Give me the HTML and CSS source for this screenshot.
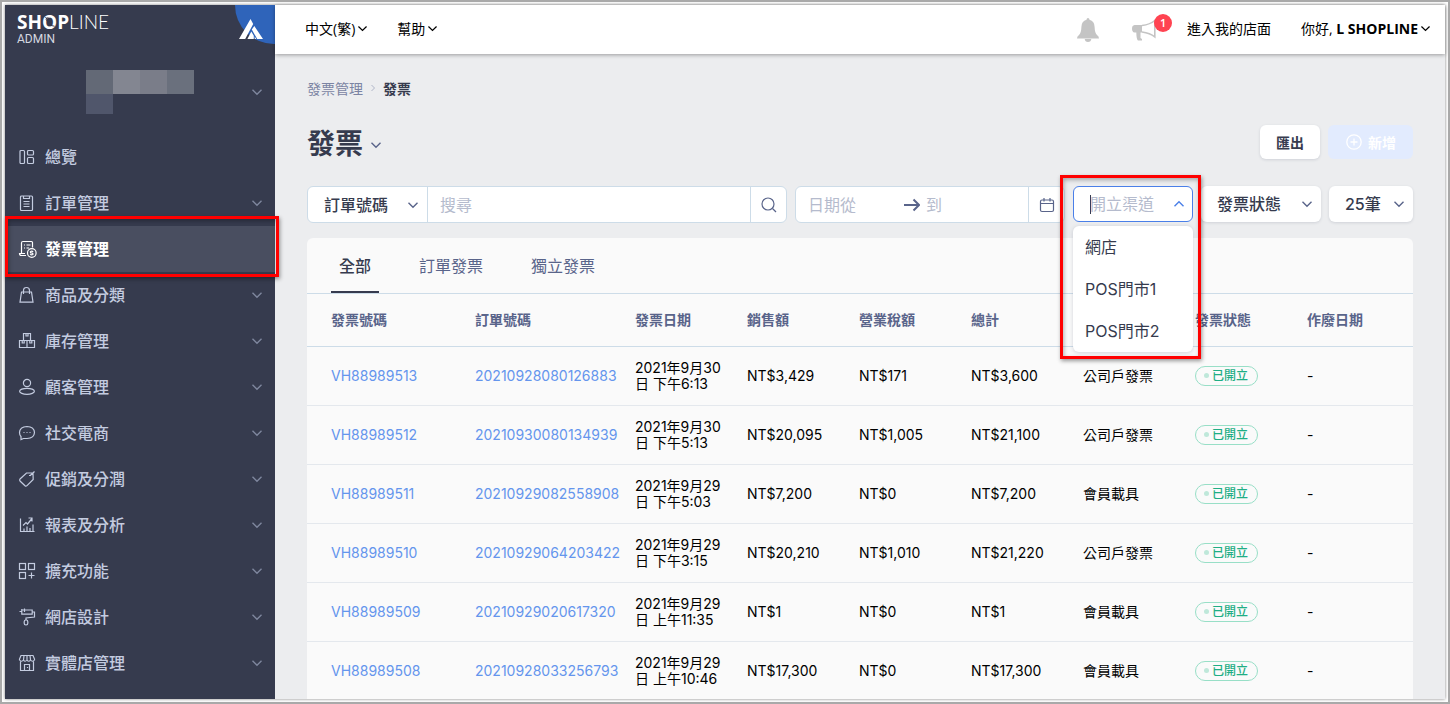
FILE: index.html
```html
<!DOCTYPE html>
<html lang="zh-Hant">
<head>
    <meta charset="UTF-8">
    <meta name="viewport" content="width=device-width, initial-scale=1.0">
    <title>發票管理 - SHOPLINE Admin</title>
    <link rel="stylesheet" href="styles.css">
</head>
<body>

<svg class="sprite" aria-hidden="true">
    <symbol id="down" viewBox="0 0 10 10"><path d="M0.5 2.8 L5 7.2 L9.5 2.8"/></symbol>
    <symbol id="up" viewBox="0 0 10 10"><path d="M0.5 7.2 L5 2.8 L9.5 7.2"/></symbol>
</svg>

<div class="app">
    <aside class="sidebar">
        <div class="brand">
            <div class="logo">
                <div class="logo-name"><b>SH<span class="logo-o">O<svg viewBox="0 0 16 16"><path d="M3.5 2.5 Q7 3.5 6.5 7.5 Q9 12.5 13.5 12"/><circle cx="6" cy="4.5" r="1.6"/></svg></span>P</b><span class="thin">LINE</span></div>
                <div class="logo-sub">ADMIN</div>
            </div>
            <a href="#" class="brand-corner" aria-label="Academy">
                <svg viewBox="0 0 24 20"><path fill="#fff" d="M0 20 L11.5 0 L14.2 5 L6.2 20 Z M15.3 7 L24 20 H18.2 L12.8 10.5 Z M12.3 12.6 L14.8 16.8 V20 H8.4 Z M15.7 17.6 L17.2 20 H15.7 Z"/></svg>
            </a>
        </div>

        <button class="account" aria-label="Store">
            <span class="mask">
                <i class="m1"></i><i class="m2"></i><i class="m3"></i><i class="m4"></i><i class="m5"></i>
            </span>
            <svg class="chev"><use href="#down"/></svg>
        </button>

        <nav class="menu">
            <a href="#"><svg class="ico" viewBox="0 0 16 16"><rect x="1" y="1.5" width="4.5" height="13" rx="1"/><rect x="8.5" y="1.5" width="6" height="4.5" rx="1"/><rect x="8.5" y="8.5" width="6" height="6" rx="1"/></svg><span>總覽</span></a>
            <a href="#"><svg class="ico" viewBox="0 0 16 16"><rect x="1.5" y="1" width="12" height="14.5" rx="1"/><path d="M4.5 1 V3.5 H10.5 V1 M4.5 6.5 H10.5 M4.5 9 H10.5 M4.5 11.5 H10.5"/></svg><span>訂單管理</span><svg class="chev"><use href="#down"/></svg></a>
            <a href="#" class="active"><svg class="ico" viewBox="0 0 16 16"><path d="M2.5 12 V2 Q2.5 0.5 4 0.5 H12.5 Q13.5 0.5 13.5 1.5 V6.5 M7 14.5 H2.5 Q0.5 14.5 0.5 12.5 H6 M5 4 H6 M7.5 4 H11.5 M5 7 H6 M7.5 7 H10"/><circle cx="12.8" cy="12" r="4.3"/><path d="M14.2 10.7 Q12.7 9.6 11.5 10.6 Q11 11.7 12.7 12 Q14.4 12.4 13.9 13.4 Q12.7 14.5 11.2 13.3"/></svg><span>發票管理</span><i class="mark"></i></a>
            <a href="#"><svg class="ico" viewBox="0 0 16 16"><path d="M2.5 5 H12.5 L14 15.2 H1 Z M4.5 7 V3.5 Q4.5 0.5 7.5 0.5 Q10.5 0.5 10.5 3.5 V7"/></svg><span>商品及分類</span><svg class="chev"><use href="#down"/></svg></a>
            <a href="#"><svg class="ico" viewBox="0 0 16 16"><path d="M4.5 0.5 H11.5 V7.5 H4.5 Z M0.5 7.5 H15.5 V14.5 H0.5 Z M8 7.5 V14.5 M7 0.5 V3 H9 V0.5 M3.2 7.5 V10 H5.2 V7.5 M10.8 7.5 V10 H12.8 V7.5"/></svg><span>庫存管理</span><svg class="chev"><use href="#down"/></svg></a>
            <a href="#"><svg class="ico" viewBox="0 0 16 16"><circle cx="8" cy="4" r="3.6"/><ellipse cx="8" cy="12.3" rx="7.4" ry="3"/></svg><span>顧客管理</span><svg class="chev"><use href="#down"/></svg></a>
            <a href="#"><svg class="ico" viewBox="0 0 16 16"><path d="M2 14.5 V11.5 Q0.5 10 0.5 7.5 Q0.8 1.8 8 1.5 Q15.2 1.8 15.5 7.5 Q15.2 13.2 8 13.5 H4.5 Z M4.5 7.5 H5.5 M7.5 7.5 H8.5 M10.5 7.5 H11.5"/></svg><span>社交電商</span><svg class="chev"><use href="#down"/></svg></a>
            <a href="#"><svg class="ico" viewBox="0 0 16 16"><path d="M15.5 0.5 L11 4.7 M13.6 2 L7.5 2 L1 8 Q0.2 9 1 10 L6 14.8 Q7 15.6 8 14.6 L14.2 8.5 L14 2.2 M12 4.5 H10"/></svg><span>促銷及分潤</span><svg class="chev"><use href="#down"/></svg></a>
            <a href="#"><svg class="ico" viewBox="0 0 16 16"><path d="M1.5 1.5 V14.5 H15.5 M5 14 V11.5 M8 14 V9.5 M11 14 V11 M14 14 V7.5 M4 8.5 L7 5.5 L8.5 7 L13 1.5 M9.5 1 H13 V4.5"/></svg><span>報表及分析</span><svg class="chev"><use href="#down"/></svg></a>
            <a href="#"><svg class="ico" viewBox="0 0 16 16"><rect x="0.5" y="0.5" width="6" height="6"/><rect x="9.5" y="0.5" width="6" height="6"/><rect x="0.5" y="9.5" width="6" height="6"/><path d="M12.5 9.5 V15.5 M9.5 12.5 H15.5"/></svg><span>擴充功能</span><svg class="chev"><use href="#down"/></svg></a>
            <a href="#"><svg class="ico" viewBox="0 0 16 16"><path d="M0.5 2.5 H3 M2.8 0 V5.2 H13.2 V1 H3 M5.5 -0.5 V3 M13.2 3 H15.5 V8 L7 9 V11"/><rect x="5.2" y="11" width="3.6" height="5" rx="1.7"/></svg><span>網店設計</span><svg class="chev"><use href="#down"/></svg></a>
            <a href="#"><svg class="ico" viewBox="0 0 16 16"><path d="M2 0.5 H14 L15.5 4 V5 Q13.5 7.5 11.5 5 Q9.8 7.5 8 5 Q6 7.5 4.5 5 Q2.5 7.5 0.5 5 V4 Z M5 0.5 L4.5 5 M8 0.5 V5 M11 0.5 L11.5 5 M1.5 6.5 V15.5 H14.5 V6.5 M5.5 15.5 V9.5 H10.5 V15.5 M8.5 12 V13"/></svg><span>實體店管理</span><svg class="chev"><use href="#down"/></svg></a>
        </nav>
    </aside>

    <div class="page">
        <header class="topbar">
            <button class="top-item">中文(繁)<svg class="chev"><use href="#down"/></svg></button>
            <button class="top-item help">幫助<svg class="chev"><use href="#down"/></svg></button>
            <button class="top-icon bell" aria-label="通知"><svg viewBox="0 0 22 24"><path d="M11 0 Q12.4 0 12.5 1.8 Q17.5 3 17.6 9 Q17.8 15 20 17 Q22 18.4 22 20.4 H0 Q0 18.4 2 17 Q4.2 15 4.4 9 Q4.5 3 9.5 1.8 Q9.6 0 11 0 Z M7.7 21 H14.3 Q14 24 11 24 Q8 24 7.7 21 Z"/></svg></button>
            <button class="top-icon horn" aria-label="公告"><svg viewBox="0 0 24 22"><path d="M2.5 6 H10 V13.5 H8.5 V19 L10 20 V21.5 H6 Q4.5 21 4.3 13.5 H2.5 Q0 13 0 9.7 Q0 6.4 2.5 6 Z"/><path class="cone" d="M10 6.5 Q18 5.5 22.8 1.5 V17.8 Q18 14 10 13"/></svg><span class="count">1</span></button>
            <a href="#" class="top-link">進入我的店面</a>
            <button class="top-item">你好,&nbsp;<b>L SHOPLINE</b><svg class="chev"><use href="#down"/></svg></button>
        </header>

        <main class="content">
            <nav class="crumbs">
                <a href="#">發票管理</a>
                <svg viewBox="0 0 6 8"><path d="M1.5 1 L4.5 4 L1.5 7"/></svg>
                <span>發票</span>
            </nav>

            <div class="heading">
                <h1>發票</h1>
                <svg class="chev"><use href="#down"/></svg>
                <button class="btn export">匯出</button>
                <button class="btn add" disabled><svg viewBox="0 0 16 16"><circle cx="8" cy="8" r="7.2"/><path d="M8 4.5 V11.5 M4.5 8 H11.5"/></svg>新增</button>
            </div>

            <div class="filters">
                <div class="search">
                    <div class="pick">
                        <select aria-label="搜尋欄位"><option>訂單號碼</option></select>
                        <svg class="chev"><use href="#down"/></svg>
                    </div>
                    <input type="text" placeholder="搜尋" aria-label="搜尋">
                    <button class="side-btn" aria-label="搜尋"><svg viewBox="0 0 16 16"><circle cx="7" cy="7" r="6"/><path d="M11.5 11.5 L15 15"/></svg></button>
                </div>
                <div class="dates">
                    <input type="text" class="from" placeholder="日期從" aria-label="日期從">
                    <svg class="arrow" viewBox="0 0 16 14"><path d="M0 7 H15 M9.5 1.5 L15 7 L9.5 12.5"/></svg>
                    <input type="text" class="to" placeholder="到" aria-label="到">
                    <button class="side-btn" aria-label="選擇日期"><svg viewBox="0 0 16 16"><rect x="1.5" y="3" width="13" height="11.5" rx="1.5"/><path d="M1.5 6.5 H14.5 M5 1 V4.5 M11 1 V4.5"/></svg></button>
                </div>
                <div class="channel">
                    <div class="pick open">
                        <i class="caret"></i>
                        <input type="text" role="combobox" aria-expanded="true" aria-controls="channels" placeholder="開立渠道" aria-label="開立渠道">
                        <svg class="chev"><use href="#up"/></svg>
                    </div>
                    <ul class="options" id="channels" role="listbox">
                        <li role="option">網店</li>
                        <li role="option">POS門市1</li>
                        <li role="option">POS門市2</li>
                    </ul>
                    <i class="mark"></i>
                </div>
                <div class="pick card-pick status-pick">
                    <select aria-label="發票狀態"><option>發票狀態</option></select>
                    <svg class="chev"><use href="#down"/></svg>
                </div>
                <div class="pick card-pick size-pick">
                    <select aria-label="每頁筆數"><option>25筆</option></select>
                    <svg class="chev"><use href="#down"/></svg>
                </div>
            </div>

            <section class="card">
                <div class="tabs" role="tablist">
                    <button role="tab" aria-selected="true" class="current">全部</button>
                    <button role="tab">訂單發票</button>
                    <button role="tab">獨立發票</button>
                </div>
                <table>
                    <colgroup>
                        <col class="c-no"><col class="c-order"><col><col><col><col><col><col><col class="c-void">
                    </colgroup>
                    <thead>
                        <tr>
                            <th>發票號碼</th>
                            <th>訂單號碼</th>
                            <th>發票日期</th>
                            <th>銷售額</th>
                            <th>營業稅額</th>
                            <th>總計</th>
                            <th></th>
                            <th>發票狀態</th>
                            <th>作廢日期</th>
                        </tr>
                    </thead>
                    <tbody>
                        <tr>
                            <td><a href="#">VH88989513</a></td>
                            <td><a href="#">20210928080126883</a></td>
                            <td>2021年9月30日 下午6:13</td>
                            <td>NT$3,429</td>
                            <td>NT$171</td>
                            <td>NT$3,600</td>
                            <td>公司戶發票</td>
                            <td><span class="tag">已開立</span></td>
                            <td>-</td>
                        </tr>
                        <tr>
                            <td><a href="#">VH88989512</a></td>
                            <td><a href="#">20210930080134939</a></td>
                            <td>2021年9月30日 下午5:13</td>
                            <td>NT$20,095</td>
                            <td>NT$1,005</td>
                            <td>NT$21,100</td>
                            <td>公司戶發票</td>
                            <td><span class="tag">已開立</span></td>
                            <td>-</td>
                        </tr>
                        <tr>
                            <td><a href="#">VH88989511</a></td>
                            <td><a href="#">20210929082558908</a></td>
                            <td>2021年9月29日 下午5:03</td>
                            <td>NT$7,200</td>
                            <td>NT$0</td>
                            <td>NT$7,200</td>
                            <td>會員載具</td>
                            <td><span class="tag">已開立</span></td>
                            <td>-</td>
                        </tr>
                        <tr>
                            <td><a href="#">VH88989510</a></td>
                            <td><a href="#">20210929064203422</a></td>
                            <td>2021年9月29日 下午3:15</td>
                            <td>NT$20,210</td>
                            <td>NT$1,010</td>
                            <td>NT$21,220</td>
                            <td>公司戶發票</td>
                            <td><span class="tag">已開立</span></td>
                            <td>-</td>
                        </tr>
                        <tr>
                            <td><a href="#">VH88989509</a></td>
                            <td><a href="#">20210929020617320</a></td>
                            <td>2021年9月29日 上午11:35</td>
                            <td>NT$1</td>
                            <td>NT$0</td>
                            <td>NT$1</td>
                            <td>會員載具</td>
                            <td><span class="tag">已開立</span></td>
                            <td>-</td>
                        </tr>
                        <tr>
                            <td><a href="#">VH88989508</a></td>
                            <td><a href="#">20210928033256793</a></td>
                            <td>2021年9月29日 上午10:46</td>
                            <td>NT$17,300</td>
                            <td>NT$0</td>
                            <td>NT$17,300</td>
                            <td>會員載具</td>
                            <td><span class="tag">已開立</span></td>
                            <td>-</td>
                        </tr>
                    </tbody>
                </table>
            </section>
        </main>
    </div>
</div>

</body>
</html>
```

FILE: styles.css
```css
* {
    box-sizing: border-box;
}
body {
    margin: 0;
    height: 100vh;
    padding: 3px;
    border: 2px solid #a9a9a9;
    background: #fff;
    overflow: hidden;
    font-family: Inter, "Noto Sans CJK TC", sans-serif;
    font-size: 14px;
    color: #000;
}
a {
    text-decoration: none;
    color: inherit;
}
button, input, select {
    font: inherit;
    color: inherit;
    border: none;
    background: none;
    padding: 0;
    margin: 0;
}
input, select {
    outline: none;
    min-width: 0;
}
svg {
    flex: none;
    fill: none;
    stroke: currentColor;
}
.sprite {
    display: none;
}
.chev {
    width: 10px;
    height: 10px;
    stroke-width: 1.4;
}
.app {
    display: flex;
    height: 100%;
    box-shadow: 0 0 3px rgba(0, 0, 0, 0.5);
}
.mark {
    position: absolute;
    border: 3px solid #ff0000;
    box-shadow: 1px 2px 4px rgba(0, 0, 0, 0.4), inset 1px 2px 4px rgba(0, 0, 0, 0.3);
    pointer-events: none;
    z-index: 5;
}

/* sidebar */
.sidebar {
    width: 270px;
    flex: none;
    background: #363b4e;
    color: #c4cce0;
}
.brand {
    display: flex;
    justify-content: space-between;
    height: 40px;
    padding-left: 12px;
}
.logo {
    padding-top: 7px;
    color: #fff;
}
.logo-name {
    font-family: "Open Sans", sans-serif;
    font-size: 19px;
    line-height: 20px;
}
.thin {
    font-family: Lato, sans-serif;
    font-weight: 300;
}
.logo-o {
    position: relative;
}
.logo-o svg {
    position: absolute;
    left: 0;
    top: 6px;
    width: 15px;
    height: 15px;
    stroke: #363b4e;
}
.logo-sub {
    font-family: Roboto, sans-serif;
    font-size: 12px;
    line-height: 14px;
    color: #d5d8e0;
}
.brand-corner {
    display: flex;
    width: 40px;
    height: 39px;
    padding: 14px 0 0 4px;
    background: #2f64ba;
    border-radius: 0 0 0 40px;
}
.brand-corner svg {
    width: 24px;
    height: 20px;
    stroke: none;
}
.account {
    display: flex;
    align-items: center;
    justify-content: space-between;
    width: 100%;
    height: 89px;
    padding: 5px 13px 0 81px;
    color: #7f879e;
}
.mask {
    display: grid;
    grid-template-columns: repeat(4, 27px);
    grid-template-rows: 24px 20px;
}
.m1 { background: #636976; }
.m2 { background: #838691; }
.m3 { background: #7a7d89; }
.m4 { background: #6a707d; }
.m5 { background: #50566b; }
.menu a {
    display: flex;
    align-items: center;
    height: 46px;
    padding: 0 13px 0 14px;
    position: relative;
    font-size: 16px;
    font-weight: 500;
}
.menu span {
    flex: 1;
    margin-left: 10px;
    padding-bottom: 2px;
}
.menu .chev {
    color: #7f879e;
}
.ico {
    width: 16px;
    height: 16px;
    overflow: visible;
    stroke-width: 1.2;
}
.menu .active {
    background: #494e60;
    color: #fff;
    font-weight: 700;
}
.menu .mark {
    left: 0;
    right: -4px;
    top: -10px;
    bottom: -5px;
}

/* top bar */
.page {
    flex: 1;
    min-width: 0;
    display: flex;
    flex-direction: column;
    background: #ecedef;
}
.topbar {
    display: flex;
    align-items: center;
    flex: none;
    height: 49px;
    padding: 0 15px 3px 30px;
    background: #fff;
    box-shadow: 0 1px 4px rgba(0, 0, 0, 0.35);
    font-family: "Open Sans", "Noto Sans CJK TC", sans-serif;
}
.top-item {
    display: flex;
    align-items: center;
}
.top-item .chev {
    width: 9px;
    height: 9px;
    margin-left: 3px;
    overflow: visible;
}
.help {
    margin: 0 auto 0 30px;
}
.top-icon svg {
    display: block;
    fill: #c4c4c4;
    stroke: none;
}
.bell, .horn {
    margin-top: 3px;
}
.bell svg {
    width: 22px;
    height: 24px;
}
.horn {
    position: relative;
    margin-left: 33px;
    margin-right: 31px;
}
.horn svg {
    width: 24px;
    height: 22px;
}
.horn .cone {
    fill: none;
    stroke: #c4c4c4;
    stroke-width: 1.6;
}
.count {
    position: absolute;
    left: 22px;
    top: -5px;
    width: 18px;
    height: 18px;
    border-radius: 50%;
    background: #ff4351;
    color: #fff;
    font-size: 11px;
    font-weight: 600;
    line-height: 18px;
    text-align: center;
}
.top-link {
    margin-right: 30px;
}

/* content */
.content {
    flex: 1;
    min-height: 0;
    overflow: hidden;
    padding: 23px 32px 0;
}
.crumbs {
    display: flex;
    align-items: center;
    gap: 7px;
    height: 22px;
    color: #7b84a3;
}
.crumbs svg {
    width: 6px;
    height: 8px;
    color: #b0b6c8;
}
.crumbs span {
    color: #363b4e;
    font-weight: 700;
}
.heading {
    display: flex;
    align-items: center;
    height: 34px;
    margin: 26px 0 27px;
    color: #363b4e;
}
h1 {
    margin: 0 8px 0 0;
    padding-top: 4px;
    font-size: 28px;
    line-height: 34px;
}
.heading .chev {
    margin-top: 6px;
    color: #59648a;
}
.btn {
    display: flex;
    align-items: center;
    justify-content: center;
    height: 34px;
    padding: 0 16px;
    border-radius: 6px;
    font-weight: 700;
}
.export {
    margin: 0 8px 0 auto;
    background: #fff;
    box-shadow: 0 1px 3px rgba(50, 60, 90, 0.15);
}
.add {
    gap: 6px;
    padding: 0 17px 0 18px;
    background: #e2ebfe;
    color: #fff;
}
.add svg {
    width: 16px;
    height: 16px;
    stroke-width: 1.3;
}
.filters {
    display: flex;
    gap: 8px;
    margin-bottom: 15px;
    font-size: 16px;
    color: #363b4e;
}
.filters ::placeholder {
    color: #b5bbcd;
    opacity: 1;
}
.filters .chev {
    color: #59648a;
}
.search, .dates {
    display: flex;
    align-items: center;
    height: 37px;
    background: #fff;
    border: 1px solid #cddce8;
    border-radius: 6px;
}
.search {
    flex: 1;
}
.search > input {
    flex: 1;
    padding-left: 12px;
}
.dates {
    width: 270px;
    padding-left: 12px;
}
.from {
    width: 96px;
}
.arrow {
    width: 16px;
    height: 14px;
    margin-right: 6px;
    color: #59648a;
    stroke-width: 2;
}
.to {
    flex: 1;
}
.side-btn {
    display: flex;
    align-items: center;
    justify-content: center;
    width: 36px;
    height: 35px;
    border-left: 1px solid #cddce8;
    color: #59648a;
}
.side-btn svg {
    width: 16px;
    height: 16px;
    stroke-width: 1.2;
}
/* select with its chevron laid over the right end */
.pick {
    display: grid;
    align-items: center;
    width: 120px;
    height: 36px;
    flex: none;
}
.pick select, .pick input, .pick .chev {
    grid-area: 1 / 1;
}
.pick select, .pick input {
    appearance: none;
    width: 100%;
    height: 100%;
    padding-left: 16px;
}
.pick select {
    font-weight: 500;
}
.pick .chev {
    justify-self: end;
    margin-right: 9px;
    pointer-events: none;
}
.search .pick {
    height: 35px;
    border-right: 1px solid #cddce8;
}
.card-pick {
    background: #fff;
    border-radius: 6px;
    box-shadow: 0 1px 3px rgba(50, 60, 90, 0.15);
}
.size-pick {
    width: 84px;
}
.channel {
    position: relative;
}
.open {
    background: #fff;
    border: 1px solid #4a7fe8;
    border-radius: 6px;
}
.filters .open .chev {
    margin-right: 8px;
    color: #4a7fe8;
}
.caret {
    grid-area: 1 / 1;
    width: 1px;
    height: 19px;
    margin-left: 16px;
    background: #363b4e;
}
.options {
    position: absolute;
    top: 40px;
    left: 0;
    right: 0;
    margin: 0;
    padding: 0;
    list-style: none;
    background: #fff;
    border-radius: 6px;
    box-shadow: 0 1px 4px rgba(50, 60, 90, 0.2);
    z-index: 4;
}
.options li {
    padding-left: 12px;
    line-height: 42px;
}
.channel .mark {
    top: -11px;
    left: -13px;
    right: -8px;
    height: 184px;
}

/* table card */
.card {
    background: #fafafa;
    border-radius: 6px 6px 0 0;
}
.tabs {
    display: flex;
    gap: 32px;
    padding: 0 24px;
    border-bottom: 1px solid #cddce8;
}
.tabs button {
    height: 55px;
    padding: 0 8px;
    border-bottom: 2px solid transparent;
    font-size: 16px;
    color: #59648a;
}
.tabs .current {
    border-bottom-color: #363b4e;
    color: #363b4e;
    font-weight: 500;
}
table {
    width: 100%;
    table-layout: fixed;
    border-collapse: collapse;
}
.c-no {
    width: 156px;
}
.c-order {
    width: 160px;
}
.c-void {
    width: 118px;
}
th, td {
    padding: 0 12px;
    text-align: left;
    line-height: 16px;
}
th:first-child, td:first-child {
    padding-left: 24px;
}
th {
    height: 52px;
    border-bottom: 1px solid #cddce8;
    color: #59648a;
    font-weight: 600;
}
td {
    height: 59px;
    border-bottom: 1px solid #e4e8ed;
}
td a {
    color: #6495ed;
}
.tag {
    display: inline-flex;
    align-items: center;
    gap: 3px;
    height: 20px;
    padding: 0 9px 0 8px;
    border: 1px solid #98dfc7;
    border-radius: 10px;
    color: #1fae85;
    font-size: 12px;
    font-weight: 500;
    vertical-align: middle;
}
.tag::before {
    content: "";
    width: 5px;
    height: 5px;
    border-radius: 50%;
    background: #bfe8da;
}
```
